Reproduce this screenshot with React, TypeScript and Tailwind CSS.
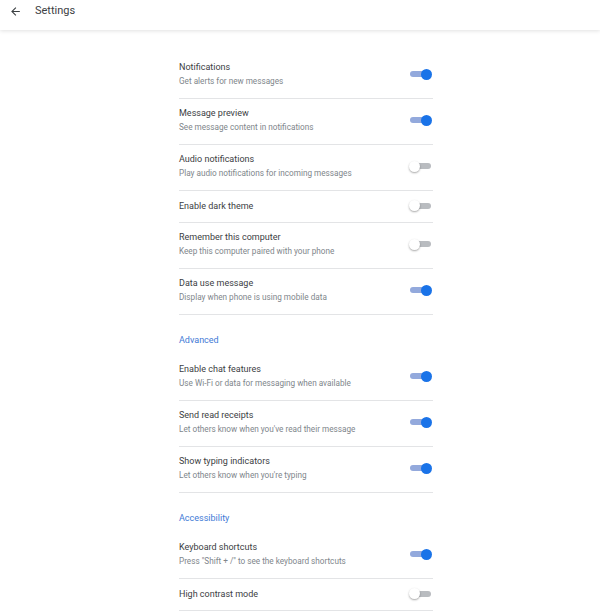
import { useState } from 'react'

type Item = { title: string; desc?: string; on: boolean }

const general: Item[] = [
  { title: 'Notifications', desc: 'Get alerts for new messages', on: true },
  { title: 'Message preview', desc: 'See message content in notifications', on: true },
  { title: 'Audio notifications', desc: 'Play audio notifications for incoming messages', on: false },
  { title: 'Enable dark theme', on: false },
  { title: 'Remember this computer', desc: 'Keep this computer paired with your phone', on: false },
  { title: 'Data use message', desc: 'Display when phone is using mobile data', on: true },
]

const advanced: Item[] = [
  { title: 'Enable chat features', desc: 'Use Wi-Fi or data for messaging when available', on: true },
  { title: 'Send read receipts', desc: "Let others know when you've read their message", on: true },
  { title: 'Show typing indicators', desc: "Let others know when you're typing", on: true },
]

const accessibility: Item[] = [
  { title: 'Keyboard shortcuts', desc: 'Press "Shift + /" to see the keyboard shortcuts', on: true },
  { title: 'High contrast mode', on: false },
]

function Toggle({ on, onClick }: { on: boolean; onClick: () => void }) {
  return (
    <button onClick={onClick} className="relative w-[23px] h-[11px] shrink-0 mr-[1px]">
      <span className={`absolute left-[1px] right-[1px] top-[2.5px] h-[6px] rounded-full ${on ? 'bg-[#93a9dc]' : 'bg-[#b9bcc0]'}`} />
      <span
        className={`absolute top-0 w-[11px] h-[11px] rounded-full ${
          on ? 'right-0 bg-[#1a73e8]' : 'left-0 bg-white shadow-[0_1px_2px_rgba(0,0,0,0.35)]'
        }`}
      />
    </button>
  )
}

function Row({ item }: { item: Item }) {
  const [on, setOn] = useState(item.on)
  return (
    <div
      className={`flex items-center border-b border-[#e3e4e6] pt-[9px] ${item.desc ? 'pb-[12px]' : 'pb-[11px]'}`}
    >
      <div className="flex-1 min-w-0">
        <div className="text-[9px] leading-[10px] text-[#3c4043]">{item.title}</div>
        {item.desc && <div className="mt-[4px] text-[8.2px] leading-[10px] text-[#80868b]">{item.desc}</div>}
      </div>
      <Toggle on={on} onClick={() => setOn(!on)} />
    </div>
  )
}

function SectionTitle({ children }: { children: string }) {
  return <div className="pt-[20px] pb-[10px] text-[9px] leading-[10px] text-[#3f7ad6]">{children}</div>
}

export default function App() {
  return (
    <div className="min-h-[614px] bg-white" style={{ fontFamily: 'Roboto, "Liberation Sans", sans-serif' }}>
      <header className="h-[30px] flex items-center shadow-[0_1px_4px_rgba(0,0,0,0.12)]">
        <svg viewBox="0 0 24 24" className="w-[13px] h-[13px] ml-[9px] mt-[-8px]" fill="#3c4043">
          <path d="M20 11H7.83l5.59-5.59L12 4l-8 8 8 8 1.41-1.41L7.83 13H20v-2z" />
        </svg>
        <span className="ml-[13px] mt-[-8px] text-[11px] text-[#3c4043]">Settings</span>
      </header>

      <main className="ml-[179px] w-[254px] pt-[23px]">
        {general.map((it) => (
          <Row key={it.title} item={it} />
        ))}
        <SectionTitle>Advanced</SectionTitle>
        {advanced.map((it) => (
          <Row key={it.title} item={it} />
        ))}
        <SectionTitle>Accessibility</SectionTitle>
        {accessibility.map((it) => (
          <Row key={it.title} item={it} />
        ))}
      </main>
    </div>
  )
}
